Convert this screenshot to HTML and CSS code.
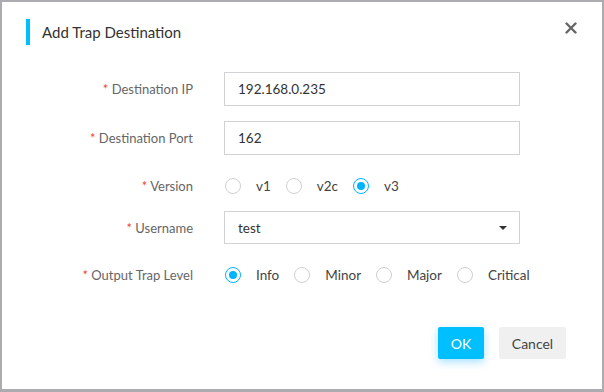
FILE: index.html
```html
<!DOCTYPE html>
<html>
<head>
<meta charset="utf-8">
<link rel="stylesheet" href="styles.css">
</head>
<body>
<div class="frame">
  <div class="dialog">
    <div class="header">
      <span class="accent"></span>
      <span class="title">Add Trap Destination</span>
      <span class="close">
        <svg width="12" height="12" viewBox="0 0 12 12"><path d="M1.5 1.5 L10.5 10.5 M10.5 1.5 L1.5 10.5" stroke="#666" stroke-width="2.4" stroke-linecap="round"/></svg>
      </span>
    </div>
    <div class="form">
      <div class="row r1">
        <label class="label"><span class="req">*</span> Destination IP</label>
        <div class="input">192.168.0.235</div>
      </div>
      <div class="row r2">
        <label class="label"><span class="req">*</span> Destination Port</label>
        <div class="input">162</div>
      </div>
      <div class="row r3">
        <label class="label"><span class="req">*</span> Version</label>
        <div class="radios">
          <span class="radio"><span class="dot"></span><span class="rtext">v1</span></span>
          <span class="radio"><span class="dot"></span><span class="rtext">v2c</span></span>
          <span class="radio on"><span class="dot"></span><span class="rtext">v3</span></span>
        </div>
      </div>
      <div class="row r4">
        <label class="label"><span class="req">*</span> Username</label>
        <div class="input select">test<span class="caret"></span></div>
      </div>
      <div class="row r5">
        <label class="label"><span class="req">*</span> Output Trap Level</label>
        <div class="radios">
          <span class="radio on"><span class="dot"></span><span class="rtext">Info</span></span>
          <span class="radio"><span class="dot"></span><span class="rtext">Minor</span></span>
          <span class="radio"><span class="dot"></span><span class="rtext">Major</span></span>
          <span class="radio"><span class="dot"></span><span class="rtext">Critical</span></span>
        </div>
      </div>
    </div>
    <div class="footer">
      <button class="btn ok">OK</button>
      <button class="btn cancel">Cancel</button>
    </div>
  </div>
</div>
</body>
</html>
```

FILE: styles.css
```css
html, body {
  margin: 0;
  padding: 0;
  background: #ababab;
}
body {
  width: 604px;
  height: 392px;
  overflow: hidden;
  font-family: Lato, "Noto Sans", sans-serif;
}
.frame {
  box-sizing: border-box;
  width: 604px;
  height: 392px;
  padding: 2px 2px 3px 2px;
  background: #acabb0;
}
.dialog {
  background: #fff;
  height: 100%;
  position: relative;
}
.header {
  display: flex;
  align-items: center;
  height: 26px;
  padding-top: 17px;
  padding-left: 24px;
}
.accent {
  width: 4px;
  height: 26px;
  background: #00bfff;
}
.title {
  margin-left: 12px;
  font-size: 15px;
  color: #333;
}
.close {
  position: absolute;
  top: 20px;
  right: 25px;
  width: 12px;
  height: 12px;
  display: flex;
}
.form {
  padding-top: 27px;
}
.row {
  display: grid;
  grid-template-columns: 191px 296px;
  column-gap: 31px;
  align-items: center;
  height: 34px;
}
.r2 { margin-top: 15px; }
.r3 { margin-top: 14px; }
.r4 { margin-top: 8px; height: 33px; }
.r5 { margin-top: 14px; }
.label {
  text-align: right;
  font-size: 13px;
  color: #666;
}
.req {
  color: #e8463a;
}
.input {
  box-sizing: border-box;
  height: 100%;
  border: 1px solid #d2d2d6;
  padding-left: 13px;
  display: flex;
  align-items: center;
  font-size: 13.5px;
  color: #333;
}
.select {
  position: relative;
}
.caret {
  position: absolute;
  right: 12px;
  top: 14px;
  width: 0;
  height: 0;
  border-left: 4.5px solid transparent;
  border-right: 4.5px solid transparent;
  border-top: 4.5px solid #333;
}
.radios {
  display: flex;
  align-items: center;
  padding-left: 1px;
}
.radio {
  display: flex;
  align-items: center;
  margin-right: 15px;
  font-size: 13.5px;
  color: #444;
}
.dot {
  box-sizing: border-box;
  width: 16px;
  height: 16px;
  border: 1px solid #d0d0d4;
  border-radius: 50%;
  display: flex;
  align-items: center;
  justify-content: center;
}
.radio.on .dot {
  border-color: #00b4ff;
}
.radio.on .dot::after {
  content: "";
  width: 8px;
  height: 8px;
  border-radius: 50%;
  background: #00b4ff;
}
.rtext {
  margin-left: 15px;
}
.footer {
  display: flex;
  justify-content: flex-end;
  gap: 15px;
  padding-right: 36px;
  margin-top: 35px;
}
.btn {
  height: 32px;
  border: none;
  border-radius: 2px;
  font-family: Lato, "Noto Sans", sans-serif;
  font-size: 14px;
  padding: 0;
}
.ok {
  width: 46px;
  background: #00bfff;
  color: #fff;
  box-shadow: 0 3px 8px rgba(0, 170, 255, 0.35);
}
.cancel {
  width: 67px;
  background: #f0f0f0;
  color: #444;
}
```
